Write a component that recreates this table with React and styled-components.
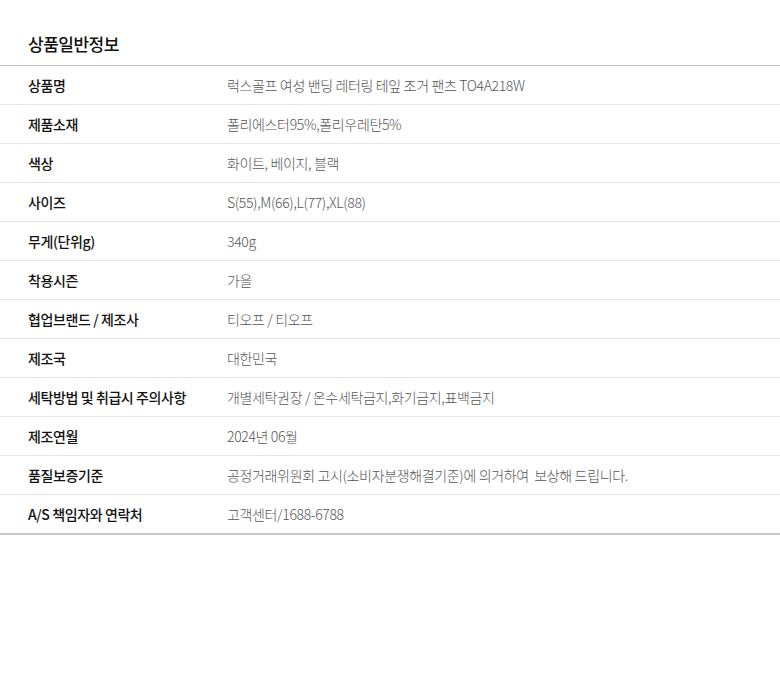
import styled, { createGlobalStyle } from "styled-components";

const GlobalStyle = createGlobalStyle`
    body {
        margin: 0;
        background: #fff;
        font-family: "Noto Sans CJK KR", "Noto Sans", sans-serif;
    }
`;

const Wrapper = styled.section`
    width: 780px;
    padding-top: 31px;
`;

const Title = styled.h3`
    margin: 0;
    padding: 0 0 9px 28px;
    height: 25px;
    font-size: 17px;
    font-weight: 500;
    line-height: 25px;
    color: #111;
    letter-spacing: -0.5px;
`;

const Table = styled.div`
    border-top: 1px solid #c4c4c4;
    border-bottom: 2px solid #c8c8c8;
`;

const Row = styled.div`
    display: grid;
    grid-template-columns: 199px 1fr;
    align-items: center;
    height: 38px;
    padding-left: 28px;
    border-bottom: ${props => props.last ? "none" : "1px solid #e4e4e4"};
`;

const Label = styled.div`
    font-size: 14px;
    font-weight: 500;
    color: #111;
    letter-spacing: -0.4px;
`;

const Value = styled.div`
    font-size: 14px;
    font-weight: 300;
    color: #555;
    letter-spacing: -0.35px;
    white-space: pre;
`;

const rows = [
    ["상품명", "럭스골프 여성 밴딩 레터링 테잎 조거 팬츠 TO4A218W"],
    ["제품소재", "폴리에스터95%,폴리우레탄5%"],
    ["색상", "화이트, 베이지, 블랙"],
    ["사이즈", "S(55),M(66),L(77),XL(88)"],
    ["무게(단위g)", "340g"],
    ["착용시즌", "가을"],
    ["협업브랜드 / 제조사", "티오프 / 티오프"],
    ["제조국", "대한민국"],
    ["세탁방법 및 취급시 주의사항", "개별세탁권장 / 온수세탁금지,화기금지,표백금지"],
    ["제조연월", "2024년 06월"],
    ["품질보증기준", "공정거래위원회 고시(소비자분쟁해결기준)에 의거하여  보상해 드립니다."],
    ["A/S 책임자와 연락처", "고객센터/1688-6788"],
];

export default function App() {
    return (
        <>
            <GlobalStyle />
            <Wrapper>
                <Title>상품일반정보</Title>
                <Table>
                    {rows.map(([label, value], i) => (
                        <Row key={label} last={i === rows.length - 1}>
                            <Label>{label}</Label>
                            <Value>{value}</Value>
                        </Row>
                    ))}
                </Table>
            </Wrapper>
        </>
    );
}
